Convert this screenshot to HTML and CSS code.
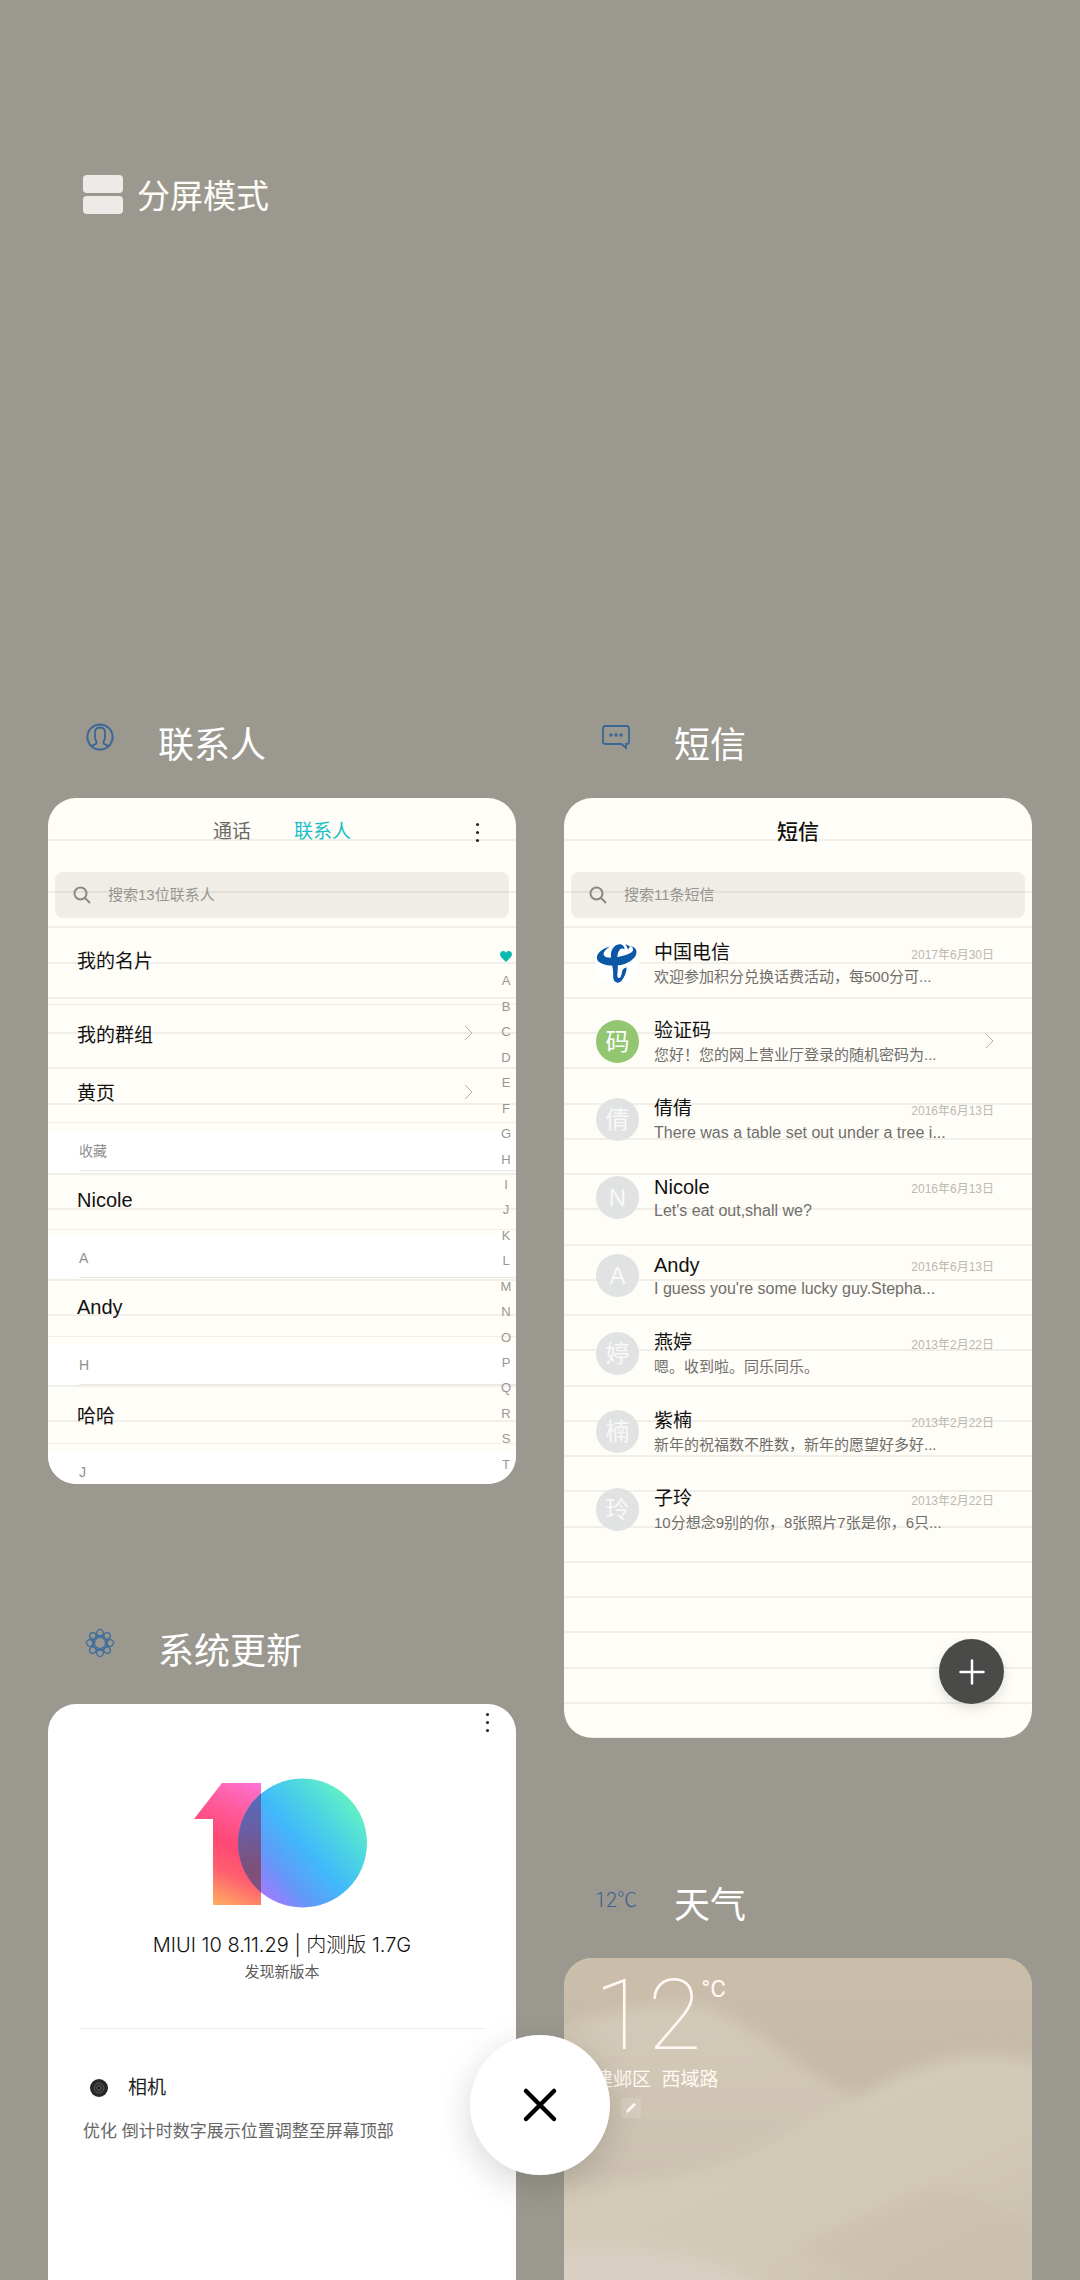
FILE: index.html
```html
<!DOCTYPE html>
<html lang="zh-CN">
<head>
<meta charset="utf-8">
<meta name="viewport" content="width=device-width, initial-scale=1">
<title>最近任务</title>
<link rel="stylesheet" href="styles.css">
</head>
<body>
<main class="recents">
  <button class="split-mode" type="button">
    <span class="split-icon" aria-hidden="true"><span></span><span></span></span>
    分屏模式
  </button>

  <div class="columns">
    <div class="column">
      <section class="task">
        <header class="task-head">
          <span class="task-icon">
            <svg width="30" height="30" viewBox="0 0 30 30" fill="none" stroke="#3a6795" stroke-width="2" aria-hidden="true">
              <circle cx="15" cy="15" r="12.6"/>
              <path d="M6.500 24c1.500-1 4.500-1 5-3 .3-1.500-1.500-3-1.500-6.500V10.500c0-3 2-5 5-5s5 2 5 5v4c0 3.500-1.800 5-1.500 6.500.5 2 3.500 2 5 3" stroke-width="1.800"/>
            </svg>
          </span>
          <h2 class="task-title">联系人</h2>
        </header>
        <article class="card card-paper">
          <div class="app-bar">
            <nav class="tabs">
              <button class="tab" type="button">通话</button>
              <button class="tab tab-active" type="button">联系人</button>
            </nav>
            <button class="more more-contacts" type="button" aria-label="更多"><i></i><i></i><i></i></button>
          </div>
          <label class="search">
            <svg width="18" height="18" viewBox="0 0 18 18" fill="none" stroke="#8b8985" stroke-width="2" aria-hidden="true"><circle cx="7.500" cy="7.500" r="6"/><path d="M12 12l5 5"/></svg>
            <input type="search" placeholder="搜索13位联系人" aria-label="搜索联系人">
          </label>
          <ul class="contacts">
            <li class="entry entry-menu entry-card"><a href="#card">我的名片</a></li>
            <li class="entry entry-menu"><a href="#groups">我的群组<svg class="chevron" viewBox="0 0 10 16"><path d="M2 1l7 7-7 7"/></svg></a></li>
            <li class="entry entry-menu entry-last"><a href="#yellow">黄页<svg class="chevron" viewBox="0 0 10 16"><path d="M2 1l7 7-7 7"/></svg></a></li>
            <li class="group"><span>收藏</span></li>
            <li class="entry entry-last" lang="en"><a href="#nicole">Nicole</a></li>
            <li class="group"><span>A</span></li>
            <li class="entry entry-last" lang="en"><a href="#andy">Andy</a></li>
            <li class="group"><span>H</span></li>
            <li class="entry entry-last"><a href="#haha">哈哈</a></li>
            <li class="group"><span>J</span></li>
          </ul>
          <nav class="index" aria-label="字母索引">
            <a href="#fav" aria-label="收藏"><svg width="12" height="11" viewBox="0 0 12 11" aria-hidden="true"><path fill="#0dbab0" d="M6 11L1 6C-.5 4.300-.2 1.700 1.500.6 3.100-.4 5 .1 6 1.700 7-.1 8.900-.4 10.500.6c1.700 1.100 2 3.700.5 5.400z"/></svg></a>
            <a href="#A">A</a><a href="#B">B</a><a href="#C">C</a><a href="#D">D</a><a href="#E">E</a><a href="#F">F</a><a href="#G">G</a><a href="#H">H</a><a href="#I">I</a><a href="#J">J</a><a href="#K">K</a><a href="#L">L</a><a href="#M">M</a><a href="#N">N</a><a href="#O">O</a><a href="#P">P</a><a href="#Q">Q</a><a href="#R">R</a><a href="#S">S</a><a href="#T">T</a>
          </nav>
        </article>
      </section>

      <section class="task task-open">
        <header class="task-head">
          <span class="task-icon">
            <svg width="30" height="30" viewBox="-15 -15 30 30" fill="none" stroke="#3a6d9c" stroke-width="1.200" aria-hidden="true">
              <circle r="5.500"/>
              <path id="petal" d="M-6.500-2.500L-2.700-8.500A3.200 3.200 0 1 1 2.700-8.500L6.500-2.500"/>
              <use href="#petal" transform="rotate(45)"/>
              <use href="#petal" transform="rotate(90)"/>
              <use href="#petal" transform="rotate(135)"/>
              <use href="#petal" transform="rotate(180)"/>
              <use href="#petal" transform="rotate(225)"/>
              <use href="#petal" transform="rotate(270)"/>
              <use href="#petal" transform="rotate(315)"/>
            </svg>
          </span>
          <h2 class="task-title">系统更新</h2>
        </header>
        <article class="card update">
          <button class="more more-update" type="button" aria-label="更多"><i></i><i></i><i></i></button>
          <svg class="logo" width="178" height="130" viewBox="0 0 178 130" role="img" aria-label="MIUI 10">
            <defs>
              <linearGradient id="one" gradientUnits="userSpaceOnUse" x1="70" y1="5" x2="14" y2="127">
                <stop offset="0" stop-color="#ff74d8"/><stop offset=".25" stop-color="#ff5c9e"/><stop offset=".52" stop-color="#ff4774"/><stop offset=".72" stop-color="#ff5f70"/><stop offset="1" stop-color="#ffb65e"/>
              </linearGradient>
              <linearGradient id="zero" gradientUnits="userSpaceOnUse" x1="160" y1="25" x2="62" y2="110">
                <stop offset="0" stop-color="#62f0c6"/><stop offset=".25" stop-color="#4bd5e2"/><stop offset=".5" stop-color="#41b9fb"/><stop offset=".75" stop-color="#5f9bf8"/><stop offset="1" stop-color="#a478ff"/>
              </linearGradient>
              <linearGradient id="lap" x1="0" y1="0" x2="0" y2="1">
                <stop offset="0" stop-color="#4b72c4"/><stop offset=".4" stop-color="#6a5ea3"/><stop offset=".7" stop-color="#7d5078"/><stop offset="1" stop-color="#8d5280"/>
              </linearGradient>
              <clipPath id="stem"><path d="M20 5h48v122H20z"/></clipPath>
            </defs>
            <path fill="url(#one)" d="M1 41L29 5h39v122H20V41z"/>
            <circle cx="109.500" cy="65" r="64.500" fill="url(#zero)"/>
            <circle cx="109.500" cy="65" r="64.500" fill="url(#lap)" clip-path="url(#stem)"/>
          </svg>
          <p class="version">MIUI 10 8.11.29 | 内测版 1.7G</p>
          <p class="status">发现新版本</p>
          <hr class="rule">
          <h3 class="module">
            <svg width="18" height="18" viewBox="0 0 18 18" aria-hidden="true"><circle cx="9" cy="9" r="9" fill="#262626"/><circle cx="9" cy="9" r="5" fill="#303030" stroke="#5a5a5a"/><circle cx="9" cy="9" r="2" fill="#111" stroke="#666"/></svg>
            相机
          </h3>
          <p class="note">优化 倒计时数字展示位置调整至屏幕顶部</p>
        </article>
      </section>
    </div>

    <div class="column">
      <section class="task">
        <header class="task-head">
          <span class="task-icon">
            <svg width="30" height="26" viewBox="0 0 30 26" fill="none" stroke="#3a6795" stroke-width="1.800" aria-hidden="true">
              <path d="M4.500 2h21A2.500 2.500 0 0 1 28 4.500v13a2.500 2.500 0 0 1-2.500 2.500H25v4l-4.500-4h-16A2.500 2.500 0 0 1 2 17.500v-13A2.500 2.500 0 0 1 4.500 2z"/>
              <g fill="#3a6795" stroke="none"><circle cx="10" cy="11" r="1.700"/><circle cx="15" cy="11" r="1.700"/><circle cx="20" cy="11" r="1.700"/></g>
            </svg>
          </span>
          <h2 class="task-title">短信</h2>
        </header>
        <article class="card card-paper card-messages">
          <div class="app-bar"><h3 class="app-title">短信</h3></div>
          <label class="search">
            <svg width="18" height="18" viewBox="0 0 18 18" fill="none" stroke="#8b8985" stroke-width="2" aria-hidden="true"><circle cx="7.500" cy="7.500" r="6"/><path d="M12 12l5 5"/></svg>
            <input type="search" placeholder="搜索11条短信" aria-label="搜索短信">
          </label>
          <ul class="messages">
            <li class="message">
              <span class="avatar avatar-telecom">
                <svg width="43" height="43" viewBox="0 0 43 43" aria-hidden="true">
                  <path fill="#0b58a6" d="M21 23.500C11 24.500 2 21.500 1 17 0 12 5 7 14 4.500 9 8 6.500 11 8 13.500c2 3 10 2.500 18 .5 8-2 12-4.500 11-7.500-.4-1.200-1.400-2-3-2.600 4 .6 6.500 2.600 6.500 6.100C40.500 16.500 32 22.500 21 23.500z"/>
                  <path fill="#0b58a6" d="M28.500 7.500c-1.500-1.500-3.500-1.500-5 .5-2 2.500-2.500 6.500-2 11.500.4 4 .5 7 0 11-.4 3-.2 5.500 1.500 5.500 1.500 0 2.200-2 2.700-4.500.5-3 1.300-5.500 5-6-.2 5.500-2.400 9.500-4.900 13-2 2.500-5.300 3-7.300.5-2-2.500-1-5.500-1.500-10.500-.5-6-2.600-10-2-17C15.500 7 18.500 3 23 2.300c3-.5 5.500 1.700 5.500 5.200z"/>
                  <path fill="#0b58a6" d="M29.500 2l4.500 2.500-2 3z"/>
                </svg>
              </span>
              <div class="message-text"><p class="name">中国电信</p><p class="preview">欢迎参加积分兑换话费活动，每500分可...</p></div>
              <time class="date">2017年6月30日</time>
            </li>
            <li class="message">
              <span class="avatar avatar-code">码</span>
              <div class="message-text"><p class="name">验证码</p><p class="preview">您好！您的网上营业厅登录的随机密码为...</p></div>
              <svg class="chevron" viewBox="0 0 10 16"><path d="M2 1l7 7-7 7"/></svg>
            </li>
            <li class="message">
              <span class="avatar">倩</span>
              <div class="message-text"><p class="name">倩倩</p><p class="preview" lang="en">There was a table set out under a tree i...</p></div>
              <time class="date">2016年6月13日</time>
            </li>
            <li class="message">
              <span class="avatar">N</span>
              <div class="message-text"><p class="name" lang="en">Nicole</p><p class="preview" lang="en">Let's eat out,shall we?</p></div>
              <time class="date">2016年6月13日</time>
            </li>
            <li class="message">
              <span class="avatar">A</span>
              <div class="message-text"><p class="name" lang="en">Andy</p><p class="preview" lang="en">I guess you're some lucky guy.Stepha...</p></div>
              <time class="date">2016年6月13日</time>
            </li>
            <li class="message">
              <span class="avatar">婷</span>
              <div class="message-text"><p class="name">燕婷</p><p class="preview">嗯。收到啦。同乐同乐。</p></div>
              <time class="date">2013年2月22日</time>
            </li>
            <li class="message">
              <span class="avatar">楠</span>
              <div class="message-text"><p class="name">紫楠</p><p class="preview">新年的祝福数不胜数，新年的愿望好多好...</p></div>
              <time class="date">2013年2月22日</time>
            </li>
            <li class="message">
              <span class="avatar">玲</span>
              <div class="message-text"><p class="name">子玲</p><p class="preview">10分想念9别的你，8张照片7张是你，6只...</p></div>
              <time class="date">2013年2月22日</time>
            </li>
          </ul>
          <button class="compose" type="button" aria-label="新建短信">
            <svg width="26" height="26" viewBox="0 0 26 26" stroke="#fff" stroke-width="2.500" stroke-linecap="round" aria-hidden="true"><path d="M13 1.500v23M1.500 13h23"/></svg>
          </button>
        </article>
      </section>

      <section class="task task-open">
        <header class="task-head">
          <span class="task-icon task-temp">12℃</span>
          <h2 class="task-title">天气</h2>
        </header>
        <article class="card weather">
          <svg class="dunes" viewBox="0 0 468 321" preserveAspectRatio="xMidYMin slice" aria-hidden="true">
            <defs>
              <linearGradient id="sky" x1="0" y1="0" x2="0" y2="1"><stop offset="0" stop-color="#cbbfac"/><stop offset=".4" stop-color="#c4b8a6"/><stop offset="1" stop-color="#c4b8a6"/></linearGradient>
              <linearGradient id="far" x1="0" y1="0" x2="0" y2="1"><stop offset="0" stop-color="#d4cab8"/><stop offset=".7" stop-color="#cabfae"/><stop offset="1" stop-color="#cabfae"/></linearGradient>
              <linearGradient id="near" x1="0" y1="0" x2="1" y2="1"><stop offset="0" stop-color="#d5ccbb"/><stop offset=".55" stop-color="#d2c9b6"/><stop offset="1" stop-color="#c6baa8"/></linearGradient>
              <filter id="haze" x="-20%" y="-20%" width="140%" height="140%"><feGaussianBlur stdDeviation="8"/></filter>
            </defs>
            <path fill="url(#sky)" d="M0 0h468v321H0z"/>
            <g filter="url(#haze)">
              <path fill="url(#far)" d="M-40 80C40 55 90 42 130 46 190 60 230 110 290 135V360H-40z"/>
              <path fill="url(#near)" d="M-40 225C60 232 140 218 200 190 280 150 330 105 400 98 440 92 480 105 520 115V380H-40z"/>
              <path fill="#c9bdac" opacity=".5" d="M230 290C300 260 340 232 380 228 420 232 440 260 470 270L440 310 330 330z"/>
              <path fill="#d9cfc2" d="M-40 300C20 285 90 285 150 305 180 315 220 330 240 370H-40z"/>
            </g>
          </svg>
          <div class="weather-body">
            <p class="temp">12<span class="unit">°C</span></p>
            <p class="place">建邺区&nbsp; 西域路</p>
            <p class="sky">霾
              <button class="edit" type="button" aria-label="编辑"><svg width="12" height="12" viewBox="0 0 12 12" aria-hidden="true"><path fill="#fffaf3" d="M1 11l1-3.500L9 .8l2 2-6.800 7z"/></svg></button>
            </p>
          </div>
        </article>
      </section>
    </div>
  </div>
</main>
<button class="close-all" type="button" aria-label="全部清除">
  <svg width="36" height="36" viewBox="0 0 36 36" stroke="#000" stroke-width="4.500" stroke-linecap="round" aria-hidden="true"><path d="M4 4l28 28M32 4L4 32"/></svg>
</button>
</body>
</html>
```

FILE: styles.css
```css
* { box-sizing: border-box; }

body, h2, h3, p, ul { margin: 0; padding: 0; }

body {
  background: #9b988f;
  color: #111;
  font-family: "Liberation Sans", "Noto Sans CJK SC", sans-serif;
}

h2, h3 { font-weight: 400; }
ul { list-style: none; }
a { color: inherit; text-decoration: none; }
svg { flex: none; display: block; }

button {
  margin: 0;
  padding: 0;
  border: 0;
  background: none;
  color: inherit;
  font: inherit;
}

.recents {
  display: flex;
  flex-direction: column;
  min-height: 100vh;
  padding: 170px 48px 0;
}

.split-mode {
  display: flex;
  align-items: center;
  gap: 14px;
  align-self: flex-start;
  height: 48px;
  margin: 0 0 472px 35px;
  color: #fdfcf8;
  font: 400 33px/48px "Noto Sans CJK SC", sans-serif;
}

.split-icon { display: grid; gap: 3px; width: 40px; }
.split-icon span { height: 18px; border-radius: 4px; background: #ecebe7; }

.columns {
  display: grid;
  grid-template-columns: 1fr 1fr;
  gap: 48px;
  flex: 1;
}

.column { display: flex; flex-direction: column; gap: 112px; min-width: 0; }
.task-open { display: flex; flex-direction: column; flex: 1; }

.task-head {
  display: flex;
  align-items: center;
  gap: 38px;
  height: 108px;
  padding-left: 32px;
}

.task-icon { display: flex; justify-content: center; width: 40px; padding-bottom: 14px; }
.task-temp { padding-bottom: 8px; color: #3a6490; font: 300 20px/24px Roboto, "Noto Sans CJK SC", sans-serif; white-space: nowrap; }
.task-title { padding-bottom: 4px; color: #fff; font: 400 36px/48px "Noto Sans CJK SC", sans-serif; }

.card {
  position: relative;
  overflow: hidden;
  border-radius: 28px;
  background: #fff;
}

.task-open .card { flex: 1; border-radius: 28px 28px 0 0; }

/* Ruled paper: one line behind the title bar, then an even ruling below it */
.card-paper {
  background:
    linear-gradient(#fffdf7 41px, #f1efea 41px, #f1efea 43px, #fffdf7 43px) 0 0 / 100% 93px no-repeat,
    linear-gradient(#f1efea 2px, #fffdf7 2px, #fffdf7 35px, #f1efea 35px, #f1efea 37px, #fffdf7 37px, #fffdf7 71px, #f1efea 71px, #f1efea 73px, #fffdf7 73px, #fffdf7 106px, #f1efea 106px, #f1efea 108px, #fffdf7 108px) 0 93px / 100% 141px repeat-y;
}

.card-messages { padding-bottom: 190px; }

.app-bar {
  display: grid;
  grid-template-columns: 1fr auto 1fr;
  align-items: center;
  height: 74px;
  padding: 0 37px 6px;
}

.tabs, .app-title { grid-column: 2; }
.tabs { display: flex; gap: 43px; }
.tab { color: #6b6965; font-size: 19px; line-height: 28px; }
.tab-active { color: #17c0c4; }
.app-title { font-size: 21px; font-weight: 500; line-height: 28px; }

.more { display: grid; gap: 5px; }
.more i { width: 3px; height: 3px; border-radius: 2px; background: #222; }
.more-contacts { justify-self: end; }

.search {
  display: flex;
  align-items: center;
  gap: 17px;
  height: 46px;
  margin: 0 7px;
  padding: 0 18px;
  border-radius: 8px;
  background: rgba(60, 45, 45, 0.08);
}

.search input {
  flex: 1;
  min-width: 0;
  padding: 0;
  border: 0;
  outline: 0;
  background: none;
  color: #333;
  font: 15px/24px "Liberation Sans", "Noto Sans CJK SC", sans-serif;
}

.search input::placeholder { color: #979590; opacity: 1; }

.contacts { height: 566px; overflow: hidden; }

.entry a {
  display: flex;
  align-items: center;
  justify-content: space-between;
  height: 59px;
  padding: 0 43px 0 29px;
  font-size: 19px;
}

.entry-card a { height: 87px; border-bottom: 1px solid #f1eee9; }
.entry-menu a { padding-bottom: 3px; }
.entry-last { padding-bottom: 8px; }
.entry-last a { border-bottom: 1px solid #f4eee6; }
.entry:lang(en) a { font-size: 20px; }

.chevron { width: 10px; height: 16px; fill: none; stroke: #b3b1ad; stroke-width: 1; }

.group { padding-left: 31px; background: #fff; }
.group span {
  display: block;
  height: 40px;
  border-bottom: 1px solid #e9e7e3;
  color: #8f8f8f;
  font-size: 14px;
  line-height: 40px;
}

.index {
  position: absolute;
  top: 150px;
  right: 2px;
  bottom: 11px;
  display: flex;
  flex-direction: column;
  justify-content: space-between;
  width: 16px;
  color: #999793;
  font-size: 13px;
  line-height: 16px;
  text-align: center;
}

.index a { display: flex; align-items: center; justify-content: center; height: 16px; }

.messages { padding-top: 6px; }

.message {
  display: flex;
  align-items: center;
  height: 78px;
  padding: 0 38px 0 32px;
}

.avatar {
  flex: none;
  width: 43px;
  height: 43px;
  margin-right: 15px;
  border-radius: 50%;
  background: #e1e2e2;
  color: #f8f9f9;
  font-size: 24px;
  line-height: 43px;
  text-align: center;
}

.avatar-code { background: #93c671; color: #fff; }
.avatar-telecom { background: #fff; }

.message-text { flex: 1; min-width: 0; padding-top: 2px; white-space: nowrap; }
.name { font-size: 19px; line-height: 26px; }
.preview { color: #706e6b; font-size: 15px; line-height: 22px; }
.name:lang(en) { font-size: 20px; }
.preview:lang(en) { font-size: 16px; }

.date {
  align-self: flex-start;
  margin-left: -40px;
  padding-top: 21px;
  color: #bbb9b4;
  font-size: 12px;
  line-height: 20px;
  white-space: nowrap;
}

.compose {
  position: absolute;
  right: 28px;
  bottom: 34px;
  display: grid;
  place-items: center;
  width: 65px;
  height: 65px;
  border-radius: 50%;
  background: #4a4a49;
  box-shadow: 0 5px 12px rgba(0, 0, 0, 0.12);
}

.update { display: flex; flex-direction: column; align-items: center; }
.more-update { align-self: flex-end; margin: 9px 27px 46px 0; }

.version {
  margin-top: 22px;
  color: #111;
  font: 300 20px/30px Inter, "Noto Sans CJK SC", sans-serif;
}

.status { color: #5c5c5c; font-size: 15px; line-height: 24px; }

.rule {
  align-self: stretch;
  height: 1px;
  margin: 44px 32px 44px 31px;
  border: 0;
  background: #ececec;
}

.module, .note { align-self: stretch; padding-left: 35px; }
.module { display: flex; align-items: center; gap: 20px; padding-left: 42px; color: #222; font-size: 19px; line-height: 30px; }
.note { margin-top: 16px; color: #666; font-size: 17px; line-height: 26px; }

.weather { background: #c8bca9; color: #fffaf3; }
.dunes { position: absolute; inset: 0; width: 100%; height: 100%; }
.weather-body { position: relative; padding: 0 30px; }

.temp { display: flex; margin-bottom: -8px; font: 100 98px/116px Roboto, sans-serif; }
.unit { padding-top: 19px; font-size: 24px; font-weight: 400; line-height: 24px; }
.place { font-size: 19px; line-height: 28px; }
.sky { display: flex; align-items: center; gap: 11px; font-size: 16px; line-height: 28px; }
.edit { display: grid; place-items: center; width: 20px; height: 20px; border-radius: 2px; background: rgba(255, 255, 255, 0.14); }

.close-all {
  position: fixed;
  bottom: 105px;
  left: 50%;
  display: grid;
  place-items: center;
  width: 140px;
  height: 140px;
  margin-left: -70px;
  border-radius: 50%;
  background: #fff;
  box-shadow: 0 10px 36px rgba(0, 0, 0, 0.16);
}
```
